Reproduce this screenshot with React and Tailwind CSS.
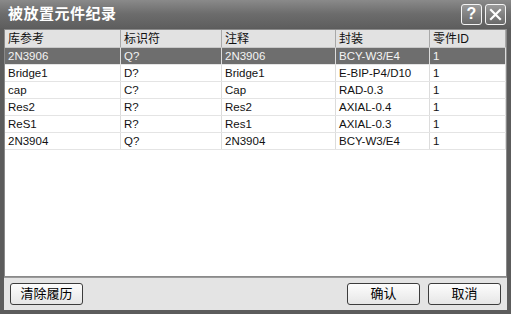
import React from 'react'

const cols = [
  { label: '库参考', w: 'w-[116px]' },
  { label: '标识符', w: 'w-[101px]' },
  { label: '注释', w: 'w-[114px]' },
  { label: '封装', w: 'w-[94px]' },
  { label: '零件ID', w: 'flex-1' },
]

const rows = [
  ['2N3906', 'Q?', '2N3906', 'BCY-W3/E4', '1'],
  ['Bridge1', 'D?', 'Bridge1', 'E-BIP-P4/D10', '1'],
  ['cap', 'C?', 'Cap', 'RAD-0.3', '1'],
  ['Res2', 'R?', 'Res2', 'AXIAL-0.4', '1'],
  ['ReS1', 'R?', 'Res1', 'AXIAL-0.3', '1'],
  ['2N3904', 'Q?', '2N3904', 'BCY-W3/E4', '1'],
]

const font = { fontFamily: '"Liberation Sans", "Noto Sans CJK SC", sans-serif' }

const TitleButton = ({ children }) => (
  <div className="w-[21px] h-[21px] rounded-[3px] border border-[#f4f4f4] bg-gradient-to-b from-[#9a9a9a] to-[#6a6a6a] flex items-center justify-center text-white">
    {children}
  </div>
)

const Button = ({ children }) => (
  <button className="h-[22px] w-[73px] rounded-[3px] border border-[#3c3c3c] bg-gradient-to-b from-[#fdfdfd] to-[#e6e6e6] text-[13px] text-black">
    {children}
  </button>
)

export default function App() {
  return (
    <div className="w-[511px] h-[318px] bg-white overflow-hidden" style={font}>
      <div className="w-[511px] h-[314px] flex flex-col bg-[#5c5c5c] px-[4px] pb-[4px]">
        {/* Title bar */}
        <div className="h-[28px] flex items-center justify-between bg-gradient-to-b from-[#8a8a8a] via-[#6c6c6c] to-[#5e5e5e] -mx-[4px] px-[8px]">
          <span className="text-white font-bold text-[15px] tracking-[0.5px]">被放置元件纪录</span>
          <div className="flex gap-[3px] mr-[-3px]">
            <TitleButton>
              <span className="font-bold text-[16px] leading-none">?</span>
            </TitleButton>
            <TitleButton>
              <svg width="13" height="13" viewBox="0 0 13 13">
                <path d="M2 2 L11 11 M11 2 L2 11" stroke="white" strokeWidth="2.2" strokeLinecap="square" />
              </svg>
            </TitleButton>
          </div>
        </div>

        {/* List */}
        <div className="flex-1 flex flex-col bg-white border border-[#8a8a8a] mt-[1px]">
          <div className="h-[18px] flex bg-[#e2e2e2] border-b border-[#c8c8c8] text-[12px] text-[#111]">
            {cols.map((c, i) => (
              <div key={i} className={`${c.w} border-r border-[#a8a8a8] pl-[3px] leading-[18px]`}>
                {c.label}
              </div>
            ))}
          </div>
          {rows.map((r, ri) => (
            <div
              key={ri}
              className={`h-[17px] flex text-[11.5px] border-b border-[#e4e4e4] ${ri === 0 ? 'bg-[#6e6e6e] text-[#f4f4f4]' : 'text-[#111]'}`}
            >
              {r.map((v, i) => (
                <div key={i} className={`${cols[i].w} border-r border-[#dcdcdc] pl-[3px] leading-[17px]`}>
                  {v}
                </div>
              ))}
            </div>
          ))}
        </div>

        {/* Footer */}
        <div className="h-[33px] flex items-center justify-between bg-[#e4e4e4] border-t border-[#9a9a9a] px-[6px]">
          <Button>清除履历</Button>
          <div className="flex gap-[8px]">
            <Button>确认</Button>
            <Button>取消</Button>
          </div>
        </div>
      </div>
    </div>
  )
}
